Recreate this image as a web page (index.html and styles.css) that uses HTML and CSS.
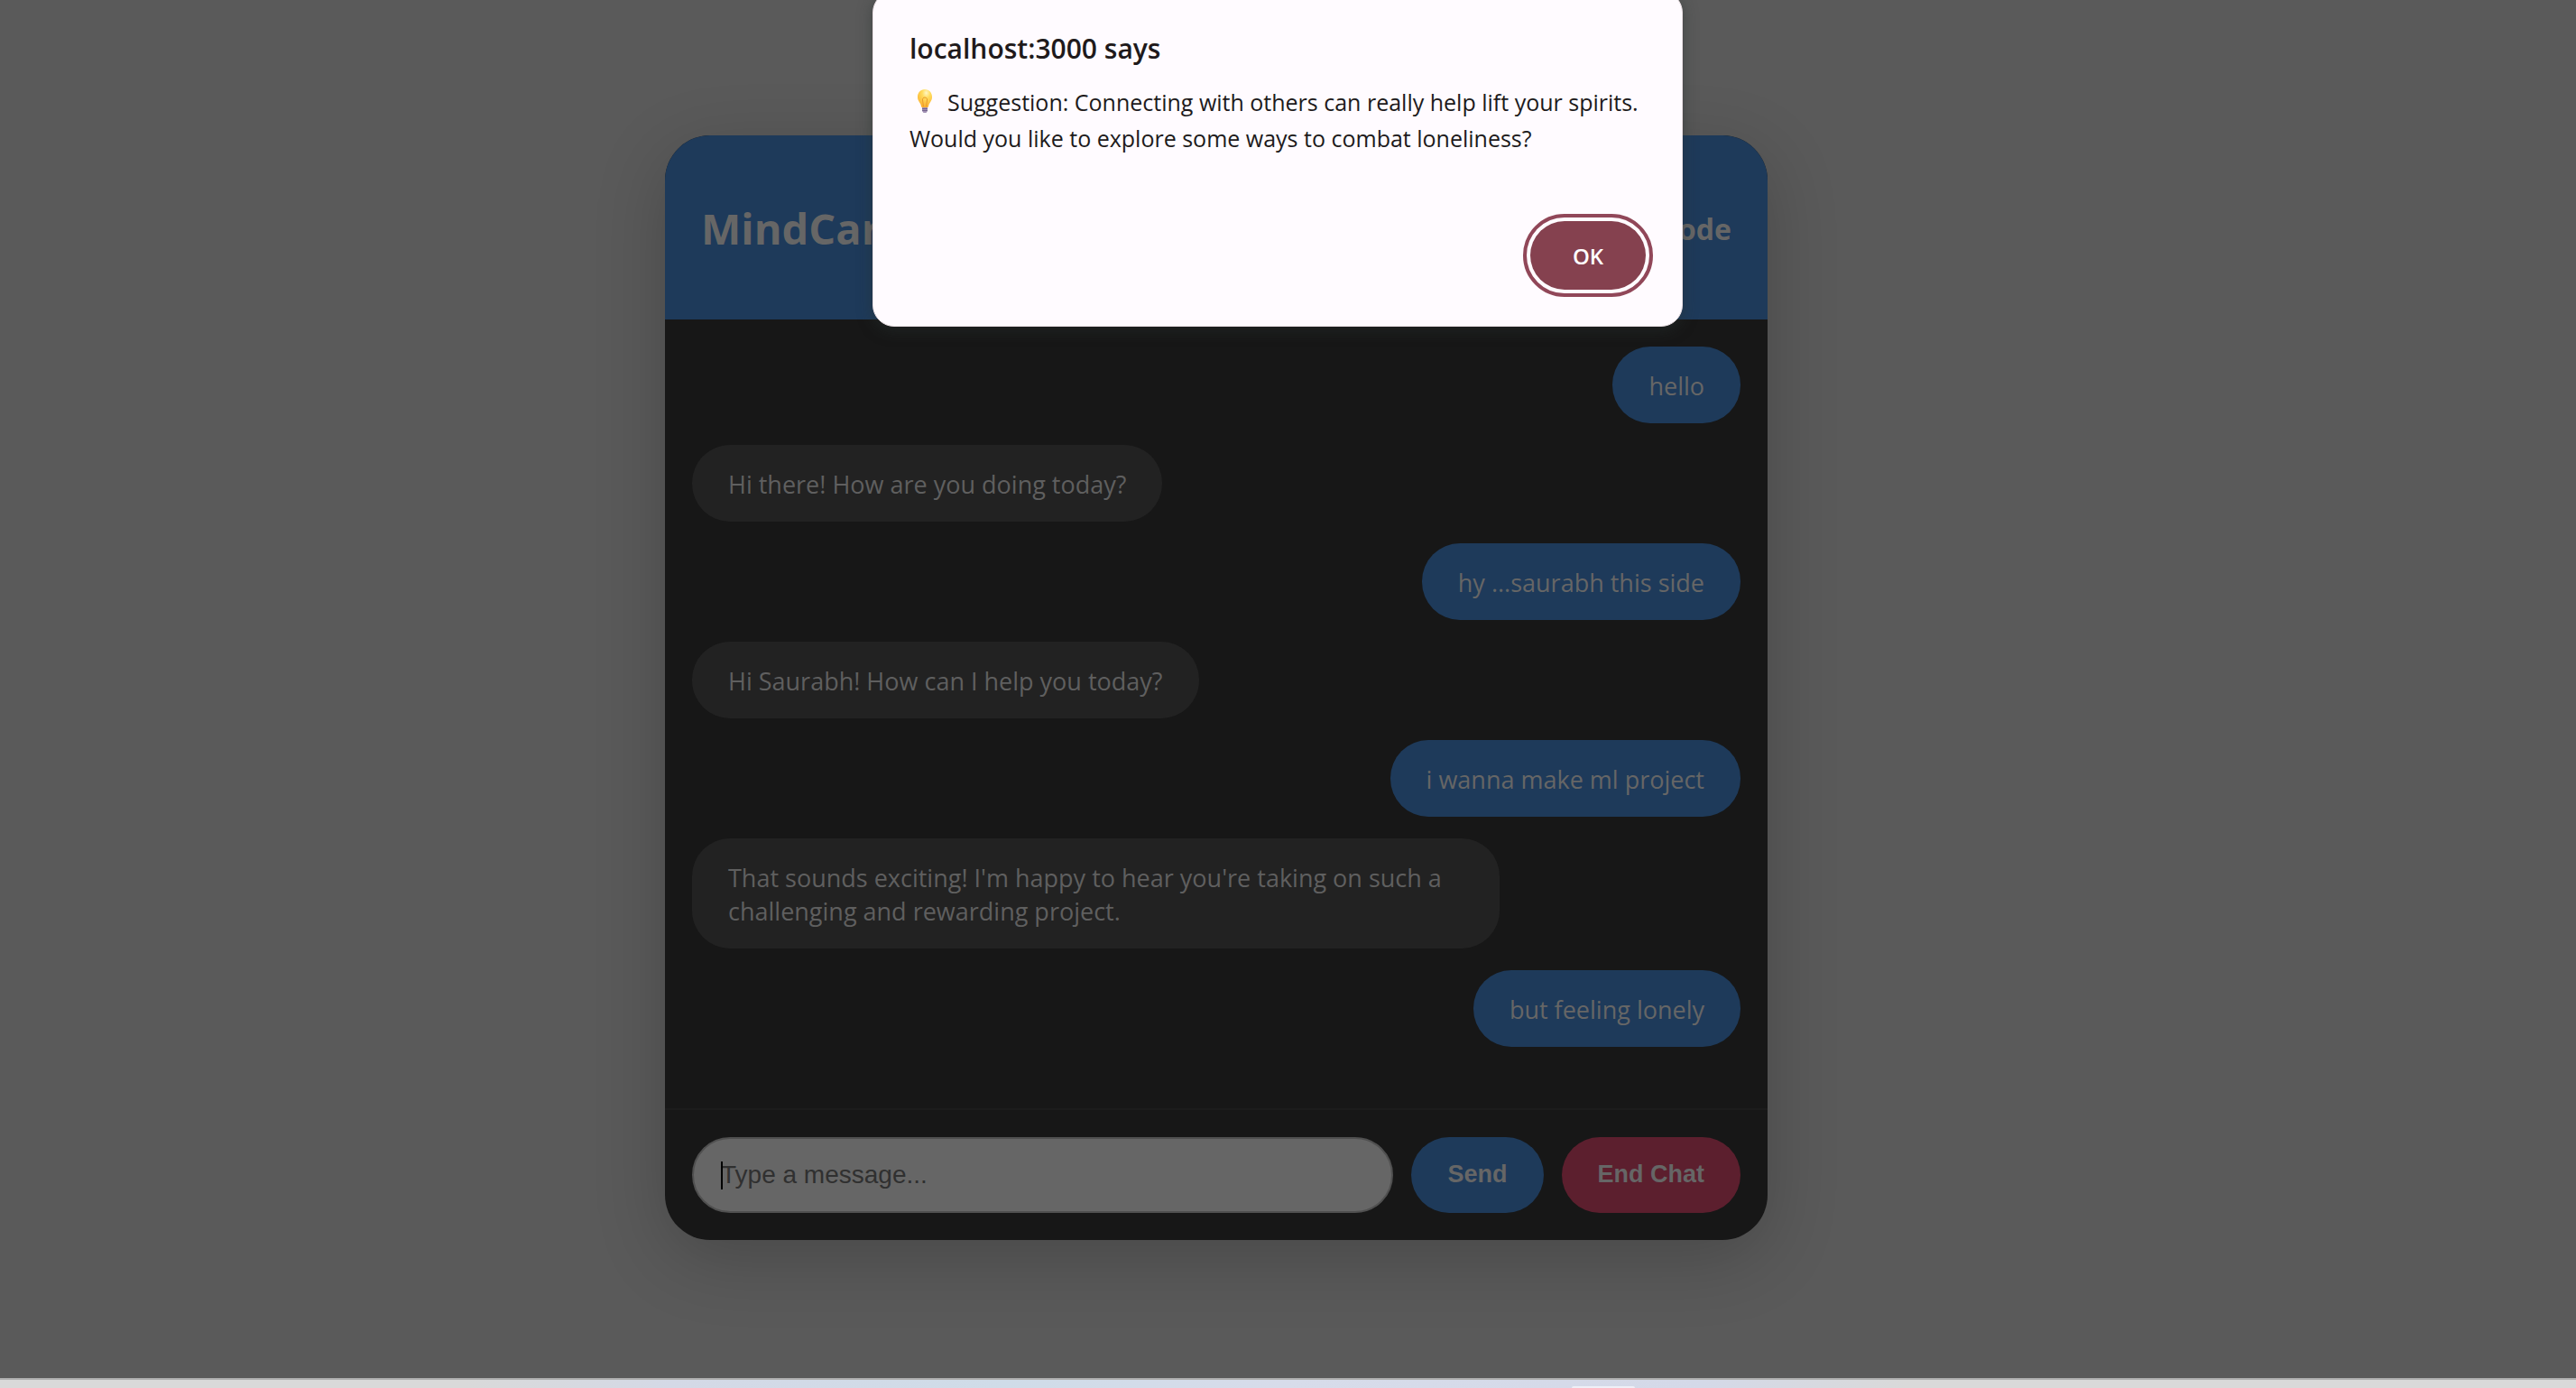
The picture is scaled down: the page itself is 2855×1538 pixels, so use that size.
FILE: index.html
```html
<!DOCTYPE html>
<html lang="en">
<head>
<meta charset="utf-8">
<meta name="viewport" content="width=device-width, initial-scale=1">
<title>MindCare</title>
<link rel="stylesheet" href="styles.css">
</head>
<body>
<main class="page">
  <section class="chat">
    <header class="chat-header">
      <h1 class="chat-title">MindCare</h1>
      <button class="mode-toggle" type="button">Mode</button>
    </header>
    <div class="messages">
      <p class="bubble user">hello</p>
      <p class="bubble bot">Hi there! How are you doing today?</p>
      <p class="bubble user">hy ...saurabh this side</p>
      <p class="bubble bot">Hi Saurabh! How can I help you today?</p>
      <p class="bubble user">i wanna make ml project</p>
      <p class="bubble bot">That sounds exciting! I'm happy to hear you're taking on such a challenging and rewarding project.</p>
      <p class="bubble user">but feeling lonely</p>
    </div>
    <form class="composer">
      <div class="field">
        <input class="message-input" type="text" placeholder="Type a message..." aria-label="Type a message">
        <span class="caret"></span>
      </div>
      <button class="pill send" type="button">Send</button>
      <button class="pill end" type="button">End Chat</button>
    </form>
  </section>
</main>
<footer class="taskbar"><span class="taskbar-item"></span></footer>
<div class="alert" role="alertdialog" aria-labelledby="alert-title" aria-describedby="alert-text">
  <h2 class="alert-title" id="alert-title">localhost:3000 says</h2>
  <p class="alert-text" id="alert-text"><svg class="bulb" viewBox="0 0 36 32" aria-hidden="true">
      <defs>
        <radialGradient id="glass" cx="0.6" cy="0.2" r="0.8">
          <stop offset="0" stop-color="#fff6c4"/>
          <stop offset="0.35" stop-color="#ffdc5e"/>
          <stop offset="1" stop-color="#fbb02f"/>
        </radialGradient>
      </defs>
      <path fill="url(#glass)" d="M17 3c5 0 8 4 8 8.500c0 4-2.500 6-3.500 8.500c-.5 1.500-.5 3-1.500 3h-6c-1 0-1-1.500-1.500-3c-1-2.500-3.500-4.500-3.500-8.500C9 7 12 3 17 3z"/>
      <path fill="none" stroke="#e99a2c" d="M15.500 22l-1-7c-.5-2 1-3 2.500-3s3 1 2.500 3l-1 7"/>
      <path fill="#a391b5" d="M14 23h6v4l-1.500 2h-3L14 27z"/>
      <path stroke="#75658e" d="M14 24.500h6M14 26.500h6"/>
    </svg>Suggestion: Connecting with others can really help lift your spirits. Would you like to explore some ways to combat loneliness?</p>
  <div class="alert-actions"><button class="ok" type="button">OK</button></div>
</div>
</body>
</html>
```
FILE: styles.css
```css
* {
  box-sizing: border-box;
}

body {
  margin: 0;
  min-height: 100vh;
  display: flex;
  flex-direction: column;
  overflow: hidden;
  background: #5a5a5a;
  font-family: "Open Sans", "Noto Sans", sans-serif;
}

button {
  border: 0;
  padding: 0;
  background: none;
  font: inherit;
  color: inherit;
}

.page {
  flex: 1;
  display: flex;
  align-items: center;
  justify-content: center;
  padding: 20px 159px 24px 0;
}

.chat {
  width: 100%;
  max-width: 1222px;
  border-radius: 50px;
  overflow: hidden;
  background: #171717;
  box-shadow: 0 20px 80px rgba(0, 0, 0, 0.2);
}

.chat-header {
  display: flex;
  align-items: center;
  justify-content: space-between;
  height: 204px;
  padding: 3px 40px 0;
  background: #1e3a5a;
  color: #666;
}

.chat-title {
  margin: 0;
  font-size: 47px;
  font-weight: 700;
}

.mode-toggle {
  font-size: 32px;
  font-weight: 700;
}

.messages {
  display: flex;
  flex-direction: column;
  gap: 24px;
  padding: 30px 30px 68px;
}

.bubble {
  margin: 0;
  max-width: 77%;
  padding: 25px 40px 23px;
  border-radius: 42px;
  font-size: 27px;
  line-height: 37px;
}

.user {
  align-self: flex-end;
  background: #1e3a5a;
  color: #666;
}

.bot {
  align-self: flex-start;
  background: #222;
  color: #5f5f5f;
}

.composer {
  display: flex;
  gap: 20px;
  padding: 30px;
  border-top: 2px solid #1c1c1c;
}

.field {
  position: relative;
  flex: 1;
}

.message-input {
  width: 100%;
  height: 84px;
  padding: 0 30px;
  border: 2px solid #505050;
  border-radius: 42px;
  background: #666;
  font-family: "Liberation Sans", sans-serif;
  font-size: 28px;
}

.message-input::placeholder {
  color: #303030;
  opacity: 1;
}

.caret {
  position: absolute;
  top: 27px;
  left: 32px;
  width: 2px;
  height: 31px;
  background: #000;
}

.pill {
  height: 84px;
  padding: 0 40px;
  border-radius: 42px;
  color: #666;
  font-family: "Liberation Sans", sans-serif;
  font-size: 27px;
  font-weight: 700;
}

.send {
  background: #1e3a5a;
}

.end {
  background: #5c1f2e;
}

.taskbar {
  position: relative;
  height: 11px;
  border-top: 2px solid #b0b0b0;
  background: linear-gradient(90deg, #d9d9d9 0%, #d9d9d9 18%, #d4d9e6 26%, #cfdce8 39%, #d7dcea 50%, #d4d9e8 66%, #d9d9d9 74%, #d9d9d9 100%);
}

.taskbar-item {
  position: absolute;
  bottom: 0;
  left: 61%;
  width: 70px;
  height: 2px;
  border-radius: 2px 2px 0 0;
  background: #eef0f7;
}

.alert {
  position: absolute;
  top: -10px;
  left: 967px;
  width: 898px;
  height: 372px;
  padding: 40px 32px 40px 40px;
  border: 1px solid #eadfe4;
  border-radius: 24px;
  background: #fffbff;
  box-shadow: 0 4px 16px rgba(40, 50, 48, 0.5);
  color: #201a1b;
}

.alert-title {
  margin: 0 0 17px;
  font-size: 30px;
  font-weight: 600;
  line-height: 45px;
}

.alert-text {
  margin: 0;
  font-size: 25px;
  line-height: 40px;
}

.bulb {
  width: 36px;
  height: 32px;
  margin-right: 6px;
  vertical-align: -5px;
}

.alert-actions {
  display: flex;
  justify-content: flex-end;
  margin-top: 72px;
  padding-right: 8px;
}

.ok {
  width: 128px;
  height: 76px;
  border-radius: 38px;
  outline: 4px solid #914759;
  outline-offset: 4px;
  background: #85414f;
  color: #fff;
  font-size: 24px;
  font-weight: 600;
}
```
